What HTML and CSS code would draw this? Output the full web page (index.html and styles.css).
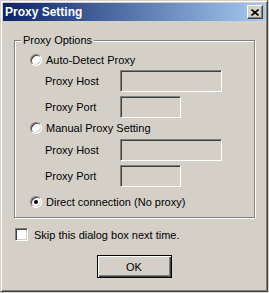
FILE: index.html
```html
<!DOCTYPE html>
<html lang="en">
<head>
  <meta charset="UTF-8">
  <title>Proxy Setting</title>
  <link rel="stylesheet" href="styles.css">
</head>
<body>
  <div class="window">
    <div class="titlebar">
      <span class="title">Proxy Setting</span>
      <button class="close" type="button">
        <svg width="8" height="7" viewBox="0 0 8 7"><path d="M0.5 0.5 L7.5 6.5 M7.5 0.5 L0.5 6.5" stroke="#000" stroke-width="1.6" fill="none"/></svg>
      </button>
    </div>
    <div class="content">
      <fieldset class="group">
        <legend>Proxy Options</legend>
        <div class="group-body">
          <div class="opt"><span class="radio"></span><span>Auto-Detect Proxy</span></div>
          <div class="field first"><span class="label">Proxy Host</span><span class="edit host"></span></div>
          <div class="field"><span class="label">Proxy Port</span><span class="edit port"></span></div>
          <div class="opt second"><span class="radio"></span><span>Manual Proxy Setting</span></div>
          <div class="field next"><span class="label">Proxy Host</span><span class="edit host"></span></div>
          <div class="field"><span class="label">Proxy Port</span><span class="edit port"></span></div>
          <div class="opt last"><span class="radio checked"></span><span>Direct connection (No proxy)</span></div>
        </div>
      </fieldset>
      <div class="check-row"><span class="checkbox"></span><span>Skip this dialog box next time.</span></div>
      <button class="ok" type="button">OK</button>
    </div>
  </div>
</body>
</html>
```

FILE: styles.css
```css
body {
  margin: 0;
  background: #d4d0c8;
  font-family: "Liberation Sans", Arial, sans-serif;
  font-size: 11px;
  color: #000;
}

.window {
  width: 268px;
  height: 292px;
  box-sizing: border-box;
  background: #d4d0c8;
  border: 1px solid;
  border-color: #d4d0c8 #404040 #404040 #d4d0c8;
  box-shadow: inset 1px 1px 0 #fff, inset -1px -1px 0 #808080;
  padding: 2px;
  display: flex;
  flex-direction: column;
}

.titlebar {
  height: 18px;
  display: flex;
  align-items: center;
  justify-content: space-between;
  padding: 0 2px 0 2px;
  background: linear-gradient(to right, #0a246a, #a6caf0);
}

.title {
  color: #fff;
  font-weight: bold;
  font-size: 12px;
  line-height: 14px;
}

.close {
  width: 16px;
  height: 14px;
  padding: 0;
  margin: 0;
  display: flex;
  align-items: center;
  justify-content: center;
  background: #d4d0c8;
  border: 1px solid;
  border-color: #fff #404040 #404040 #fff;
  box-shadow: inset -1px -1px 0 #808080;
}

.content {
  display: flex;
  flex-direction: column;
  padding-top: 13px;
}

.group {
  margin: 0 10px 0 11px;
  padding: 0;
  border: 1px solid #808080;
  box-shadow: 1px 1px 0 #fff, inset 1px 1px 0 #fff;
}

.group legend {
  margin-left: 6px;
  padding: 0 2px;
  line-height: 13px;
  background: #d4d0c8;
}

.group-body {
  padding: 6px 0 8px 15px;
}

.opt {
  height: 14px;
  display: flex;
  align-items: center;
  gap: 4px;
}

.opt.second {
  margin-top: 3px;
}

.opt.last {
  margin-top: 8px;
}

.radio {
  width: 12px;
  height: 12px;
  box-sizing: border-box;
  border-radius: 50%;
  background: #fff;
  border: 1px solid;
  border-color: #808080 #fff #fff #808080;
  box-shadow: inset 1px 1px 0 #404040, inset -1px -1px 0 #d4d0c8;
  display: flex;
  align-items: center;
  justify-content: center;
}

.radio.checked::after {
  content: "";
  width: 4px;
  height: 4px;
  border-radius: 50%;
  background: #000;
}

.field {
  height: 22px;
  display: flex;
  align-items: center;
  padding-left: 15px;
  margin-top: 4px;
}

.field.first {
  margin-top: 3px;
}

.label {
  width: 75px;
}

.edit {
  height: 22px;
  box-sizing: border-box;
  background: #d4d0c8;
  border: 1px solid;
  border-color: #808080 #fff #fff #808080;
  box-shadow: inset 1px 1px 0 #404040, inset -1px -1px 0 #d4d0c8;
}

.edit.host {
  width: 102px;
}

.edit.port {
  width: 61px;
}

.check-row {
  height: 13px;
  margin-top: 10px;
  padding-left: 12px;
  display: flex;
  align-items: center;
  gap: 6px;
}

.checkbox {
  width: 13px;
  height: 13px;
  box-sizing: border-box;
  background: #fff;
  border: 1px solid;
  border-color: #808080 #fff #fff #808080;
  box-shadow: inset 1px 1px 0 #404040, inset -1px -1px 0 #d4d0c8;
}

.ok {
  align-self: center;
  width: 75px;
  height: 23px;
  margin-top: 14px;
  padding: 0;
  font-family: "Liberation Sans", Arial, sans-serif;
  font-size: 11px;
  color: #000;
  background: #d4d0c8;
  border: 1px solid #000;
  box-shadow: inset 1px 1px 0 #fff, inset -1px -1px 0 #404040, inset -2px -2px 0 #808080;
}
```
